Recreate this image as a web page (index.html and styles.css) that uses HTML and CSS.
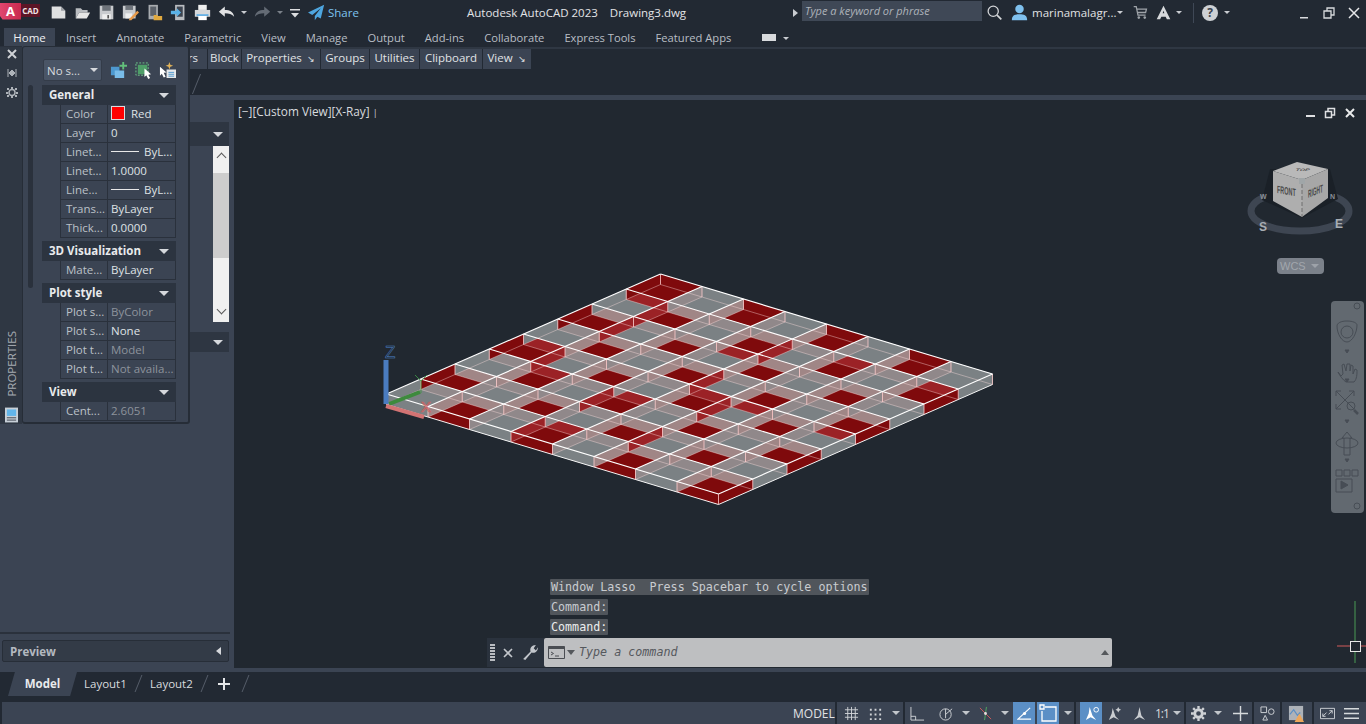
FILE: index.html
```html
<!DOCTYPE html>
<html lang="en">
<head>
<meta charset="utf-8">
<title>Autodesk AutoCAD 2023 Drawing3.dwg</title>
<link rel="stylesheet" href="styles.css">
</head>
<body>
<header class="titlebar">
  <div class="logo"><span class="logo-a">A</span><span class="logo-cad">CAD</span></div>
  <div class="qa">
    <svg class="ic" viewBox="0 0 20 20"><path d="M2 3h11l5 5v9H2z" fill="#dfe0e1"/><path d="M13 3v5h5z" fill="#9a9da1"/></svg>
    <svg class="ic" viewBox="0 0 20 20"><path d="M2 17V5h6l2 2h6v3H6z" fill="#b9bcc0"/><path d="M2 17l4-7h13l-4 7z" fill="#e6e6e6"/></svg>
    <svg class="ic" viewBox="0 0 20 20"><path d="M2 2h16v16H2z" fill="#c9cbce"/><path d="M5 2h10v6H5z" fill="#6f747b"/><path d="M5 12h10v6H5z" fill="#eee"/><path d="M11 13h2v4h-2z" fill="#555"/></svg>
    <svg class="ic" viewBox="0 0 20 20"><path d="M1 2h15v15H1z" fill="#c9cbce"/><path d="M4 2h9v5H4z" fill="#6f747b"/><path d="M4 11h8v6H4z" fill="#eee"/><path d="M9 17l9-9 2 2-9 9H8z" fill="#e79a4a"/></svg>
    <svg class="ic" viewBox="0 0 20 20"><path d="M3 1h11v17H3z" fill="#a9acb0"/><path d="M5 3h7v11H5z" fill="#5b616a"/><path d="M9 13h4l1 1h5v5H9z" fill="#e0a93f"/></svg>
    <svg class="ic" viewBox="0 0 20 20"><path d="M6 1h11v18H6z" fill="#b9bcc0"/><path d="M8 3h7v12H8z" fill="#3d4450"/><path d="M1 8h7V5l5 5-5 5v-3H1z" fill="#59b1e6"/></svg>
    <svg class="ic" viewBox="0 0 20 20"><path d="M5 1h10v6H5z" fill="#efefef"/><path d="M1 7h18v8H1z" fill="#d6d8da"/><path d="M5 12h10v7H5z" fill="#fff"/><path d="M3 12h14v2H3z" fill="#5aa9e0"/></svg>
    <svg class="ic" viewBox="0 0 20 20"><path d="M1 9l7-6v4c6 0 10 2 11 8-3-3-6-4-11-4v4z" fill="#e2e3e5"/></svg>
    <i class="caret caret-s qa-c1"></i>
    <svg class="ic qa-redo" viewBox="0 0 20 20"><path d="M19 9l-7-6v4C6 7 2 9 1 15c3-3 6-4 11-4v4z" fill="#646b75"/></svg>
    <i class="caret caret-s qa-c2"></i>
    <svg class="ic-s qa-more" viewBox="0 0 12 12"><path d="M1 2h10v1.500H1z" fill="#dcdde0"/><path d="M2 6h8L6 10.500z" fill="#dcdde0"/></svg>
    <svg class="ic qa-share" viewBox="0 0 20 20"><path d="M19 1L0 10l5 3 10-8-7 9v5l3-4 4 2z" fill="#4ea6e0"/></svg>
    <span class="share">Share</span>
  </div>
  <div class="doc-title">Autodesk AutoCAD 2023&nbsp;&nbsp;&nbsp;&nbsp;Drawing3.dwg</div>
  <i class="tri-r"></i>
  <div class="search">Type a keyword or phrase</div>
  <svg class="ic tb-search" viewBox="0 0 20 20"><circle cx="8.500" cy="8.500" r="6" fill="none" stroke="#d4d6d9" stroke-width="1.500"/><path d="M13 13l5 5" stroke="#d4d6d9" stroke-width="2"/></svg>
  <svg class="ic tb-user" viewBox="0 0 20 20"><circle cx="10" cy="6" r="5" fill="#7fc0ee"/><path d="M1 19c0-6 4-7 9-7s9 1 9 7z" fill="#7fc0ee"/></svg>
  <span class="username">marinamalagr...</span>
  <i class="caret caret-s tb-c1"></i>
  <svg class="ic tb-cart" viewBox="0 0 20 20"><path d="M2 3h3l2 10h9M6 6h11l-1 4H7" fill="none" stroke="#9ea3a9" stroke-width="1.500"/><circle cx="8" cy="16" r="1.500" fill="#9ea3a9"/><circle cx="15" cy="16" r="1.500" fill="#9ea3a9"/></svg>
  <svg class="ic tb-a" viewBox="0 0 20 20"><path d="M10 2l8 16h-4l-1.500-3h-5L6 18H2zM9 11h2l-1-3z" fill="#d6d8db" fill-rule="evenodd"/></svg>
  <i class="caret caret-s tb-c2"></i>
  <i class="tb-sep"></i>
  <span class="help">?</span>
  <i class="caret caret-s tb-c3"></i>
  <div class="winctl">
    <svg class="ic-s" viewBox="0 0 12 12"><path d="M2 10h8v1.500H2z" fill="#d8dade"/></svg>
    <svg class="ic-s" viewBox="0 0 12 12"><path d="M1 4h7v7H1zM4 4V1h7v7H8" fill="none" stroke="#d8dade" stroke-width="1.300"/></svg>
    <svg class="ic-s" viewBox="0 0 12 12"><path d="M1 1l10 10M11 1L1 11" stroke="#e6e7e9" stroke-width="1.500"/></svg>
  </div>
</header>

<nav class="tabs">
  <span class="tab active">Home</span><span class="tab">Insert</span><span class="tab">Annotate</span><span class="tab">Parametric</span><span class="tab">View</span><span class="tab">Manage</span><span class="tab">Output</span><span class="tab">Add-ins</span><span class="tab">Collaborate</span><span class="tab">Express Tools</span><span class="tab">Featured Apps</span>
  <i class="tab-min"></i><i class="caret caret-s tab-c"></i>
</nav>

<div class="panelbar">
  <span class="pb-item pb-first">Layers</span><span class="pb-item pb-block">Block</span><span class="pb-item pb-props">Properties <b class="arrow">&#8600;</b></span><span class="pb-item pb-groups">Groups</span><span class="pb-item pb-util">Utilities</span><span class="pb-item pb-clip">Clipboard</span><span class="pb-item pb-view">View <b class="arrow">&#8600;</b></span>
</div>
<div class="ribbon-body"><i class="slash slash-rb"></i></div>

<main class="workspace">
  <aside class="toolpal">
    <div class="tp-head"><i class="tri-d tp-tri"></i></div>
    <div class="tp-list">
      <div class="tp-scroll">
        <span class="sb-up"></span>
        <span class="sb-thumb"></span>
        <span class="sb-down"></span>
      </div>
    </div>
    <div class="tp-head tp-head2"><i class="tri-d tp-tri"></i></div>
    <div class="tp-fill"></div>
    <div class="tp-preview"><span>Preview</span><i class="tri-l"></i></div>
  </aside>

  <section class="viewport">
    <svg class="canvas" viewBox="234 100 1132 568" xmlns="http://www.w3.org/2000/svg">
      <g id="model"></g>
      <!-- UCS icon -->
      <g>
        <path d="M421 381v12" stroke="#3f9a3f" stroke-width="0.800"/>
        <path d="M415 375l6 6 6-6" fill="none" stroke="#3fa04a" stroke-width="0.800"/>
        <path d="M389 404l31-12" stroke="#3d8a3d" stroke-width="4"/>
        <path d="M386 360v44" stroke="#4a7cc0" stroke-width="5"/>
        <path d="M386 406l38 11" stroke="#d27373" stroke-width="4"/>
        <text class="ucs-z" x="385" y="358">Z</text>
        <text class="ucs-x" x="421" y="412">X</text>
      </g>
      <!-- view cube -->
      <ellipse cx="1300" cy="211" rx="49" ry="20" fill="none" stroke="#3e4652" stroke-width="7"/>
      <path d="M1262 200l40 18 36-19-8-30h-60z" fill="#1a2027"/>
      <text class="cube-dir" x="1259" y="231">S</text>
      <text class="cube-dir" x="1335" y="228">E</text>
      <text class="cube-dir cube-w" x="1260" y="199">W</text>
      <text class="cube-dir cube-w" x="1330" y="199">N</text>
      <path d="M1297 162l31 7-26 11-29-9z" fill="#b9b9b9"/>
      <path d="M1273 171l29 9v37l-29-16z" fill="#aeaeae"/>
      <path d="M1302 180l26-11v29l-26 19z" fill="#a7a7a7"/>
      <path d="M1299 178h6v6h-6z" fill="#a0a6a8"/>
      <path d="M1302 184v33" stroke="#6f6f6f" stroke-width="1" stroke-dasharray="4 2"/>
      <text class="cube-t" transform="translate(1277 193) skewY(10) scale(.68 1.350)">FRONT</text>
      <text class="cube-t" transform="translate(1308 198) skewY(-22) scale(.6 1.400)">RIGHT</text>
      <text class="cube-top" transform="translate(1295 171) skewX(-30) scale(1 .5)">TOP</text>
      <rect x="1277" y="258" width="47" height="16" rx="4" fill="#7b818a"/>
      <text class="wcs" x="1280" y="270">WCS</text>
      <path d="M1311 264h8l-4 4z" fill="#9da2a9"/>
      <!-- navigation bar -->
      <rect x="1331" y="301" width="33" height="212" rx="4" fill="#626970"/>
      <g class="nav-ic">
        <circle cx="1357" cy="306" r="3"/>
        <circle cx="1347" cy="332" r="6"/>
        <path d="M1347 321c6 0 10 2 10 4 0 8-5 17-10 17s-10-8-10-16c0-3 4-5 10-5z"/>
        <path d="M1338 372c2 4 5 8 8 10h8c3-3 3-8 3-12l-2-1-2 5v-8l-2-1-1 6v-7h-3l-1 7-2-7-2 1 1 9-2 2-3-4z"/>
        <path d="M1336 391l18 18M1354 391l-18 18M1336 391h5M1336 391v5M1354 391h-5M1354 391v5M1336 409v-5M1336 409h5"/>
        <circle cx="1351" cy="406" r="4"/>
        <path d="M1354 410l4 4" stroke-width="2.500"/>
        <path d="M1347 432l5 6h-2v17h-6v-17h-2z"/>
        <ellipse cx="1347" cy="443" rx="11" ry="5"/>
        <path d="M1336 470h6v6h-6zM1344 470h6v6h-6zM1352 470h6v6h-6zM1336 479h16v13h-16z"/>
        <path d="M1341 481l7 4-7 4z" fill="#474d55"/>
        <circle cx="1357" cy="506" r="3"/>
        <path d="M1345 350h4l-2 3zM1345 379h4l-2 3zM1345 420h4l-2 3zM1345 459h4l-2 3z" fill="#474d55"/>
      </g>
      <!-- crosshair -->
      <path d="M1355 601v40M1355 651v12" stroke="#4a9a55" stroke-width="1"/>
      <path d="M1337 646h13M1360 646h6" stroke="#d25a5a" stroke-width="1"/>
      <rect x="1350.500" y="641.500" width="10" height="10" fill="none" stroke="#e8e8e8"/>
    </svg>

    <div class="vp-label">[&#8722;][Custom View][X-Ray] <span class="vp-caret">|</span></div>
    <div class="vp-ctl">
      <svg class="ic-s" viewBox="0 0 12 12"><path d="M2 8h9v2H2z" fill="#dfe0e2"/></svg>
      <svg class="ic-s" viewBox="0 0 12 12"><path d="M1.500 4.500h6v6h-6zM4 4V1.500h6.500V8H8" fill="none" stroke="#dfe0e2" stroke-width="1.500"/></svg>
      <svg class="ic-s" viewBox="0 0 12 12"><path d="M2 2l8 8M10 2l-8 8" stroke="#e9eaeb" stroke-width="2"/></svg>
    </div>

    <div class="cmd">
      <div class="cmd-lines">
        <span class="cmd-line">Window Lasso  Press Spacebar to cycle options</span>
        <span class="cmd-line">Command:</span>
        <span class="cmd-line cmd-bright">Command:</span>
      </div>
      <div class="cmd-bar">
        <div class="cmd-tools">
          <i class="grip"></i>
          <svg class="ic-s" viewBox="0 0 12 12"><path d="M2 2l8 8M10 2l-8 8" stroke="#c2c6cb" stroke-width="1.600"/></svg>
          <svg class="ic" viewBox="0 0 16 16"><path d="M2 14l7-7c-1-3 1-6 5-6l-2 3 2 2 2-3c0 4-3 6-6 5l-6 7z" fill="#c2c6cb"/></svg>
        </div>
        <div class="cmd-input">
          <svg class="cmd-prompt" viewBox="0 0 17 13"><path d="M.5.500h16v12H.5z" fill="none" stroke="#4a4d52"/><path d="M.5.500h16v2.500H.5z" fill="#4a4d52"/><path d="M3 6l2.500 1.500L3 9M7 10h4" fill="none" stroke="#4a4d52"/></svg>
          <i class="tri-d tri-dark"></i>
          <span class="cmd-ph">Type a command</span>
          <i class="tri-u"></i>
        </div>
      </div>
    </div>
  </section>
</main>

<div class="band"></div>
<div class="layouts">
  <span class="lt-model">Model</span>
  <span class="lt">Layout1</span><i class="slash"></i>
  <span class="lt">Layout2</span><i class="slash"></i>
  <svg class="lt-plus" viewBox="0 0 14 14"><path d="M7 1v12M1 7h12" stroke="#e4e6e8" stroke-width="2"/></svg><i class="slash"></i>
</div>

<footer class="status">
  <span class="st-grp st-model">MODEL</span>
  <span class="st-grp st-a">
    <svg class="st-ic" viewBox="0 0 16 16"><path d="M4 1v14M8 1v14M12 1v14M1 4h14M1 8h14M1 12h14" stroke="#cfd2d6"/></svg>
    <svg class="st-ic" viewBox="0 0 16 16"><path d="M2 3h2v2H2zM7 3h2v2H7zM12 3h2v2h-2zM2 8h2v2H2zM7 8h2v2H7zM12 8h2v2h-2zM2 13h2v2H2zM7 13h2v2H7zM12 13h2v2h-2z" fill="#cfd2d6"/></svg>
    <i class="caret st-car"></i>
  </span>
  <span class="st-grp st-b">
    <svg class="st-ic" viewBox="0 0 16 16"><path d="M1 1v14h14M1 11h5v4" fill="none" stroke="#cfd2d6"/></svg>
    <svg class="st-ic st-m" viewBox="0 0 16 16"><circle cx="7" cy="9" r="6" fill="none" stroke="#cfd2d6"/><path d="M7 9l7-6M7 3v10" stroke="#cfd2d6"/></svg>
    <i class="caret st-car st-m2"></i>
    <svg class="st-ic st-m2" viewBox="0 0 16 16"><path d="M2 2l12 12" stroke="#d25a5a"/><path d="M9 1L7 15" stroke="#4faa5f"/><circle cx="8" cy="8" r="1.500" fill="#e0e0e0"/></svg>
    <i class="caret st-car st-m2"></i>
  </span>
  <span class="st-on st-on1"><svg class="st-ic" viewBox="0 0 16 16"><path d="M14 2L1 14h14" fill="none" stroke="#fff" stroke-width="1.300"/><circle cx="8" cy="8" r="1.700" fill="#fff"/></svg></span>
  <span class="st-on st-on2"><svg class="st-ic st-box" viewBox="0 0 18 18"><path d="M6 3h11v14H3V7" fill="none" stroke="#fff" stroke-width="1.300"/><path d="M1 1h4v4H1z" fill="none" stroke="#fff" stroke-width="1.300"/></svg></span>
  <span class="st-grp st-c"><i class="caret st-car"></i></span>
  <span class="st-grp st-d">
    <span class="st-on st-on3"><svg class="st-ic" viewBox="0 0 16 16"><path d="M6 1l3 9 4 5-6-3-5 3 3-7z" fill="#fff"/><circle cx="13" cy="4" r="2.500" fill="none" stroke="#fff"/></svg></span>
    <svg class="st-ic st-m4" viewBox="0 0 16 16"><path d="M6 2l3 9 4 4-6-3-5 3 3-7z" fill="#c9ccd0"/><path d="M12 1l1 2 2 1-2 1-1 2-1-2-2-1 2-1z" fill="#c9ccd0"/></svg>
    <svg class="st-ic st-m5" viewBox="0 0 16 16"><path d="M8 1l2 9 4 5-6-3-6 3 4-5z" fill="#c9ccd0"/></svg>
    <span class="st-scale">1:1</span>
    <i class="caret st-car st-m6"></i>
  </span>
  <span class="st-grp st-e">
    <svg class="st-ic" viewBox="0 0 16 16"><circle cx="8" cy="8" r="4" fill="none" stroke="#cfd2d6" stroke-width="3"/><path d="M8 0v3M8 13v3M0 8h3M13 8h3M2.300 2.300l2 2M11.700 11.700l2 2M2.300 13.700l2-2M11.700 4.300l2-2" stroke="#cfd2d6" stroke-width="2.500"/></svg>
    <i class="caret st-car st-m2"></i>
  </span>
  <span class="st-grp st-f"><svg class="st-ic" viewBox="0 0 16 16"><path d="M8 0v16M0 8h16" stroke="#d6d9dc" stroke-width="1.500"/></svg></span>
  <span class="st-grp st-g"><svg class="st-ic" viewBox="0 0 16 16"><path d="M1 1h6v6H1zM3 15l2.500-5L8 15z" fill="none" stroke="#cfd2d6"/><circle cx="12" cy="6" r="3" fill="none" stroke="#cfd2d6"/></svg></span>
  <span class="st-grp st-h"><svg class="st-warn" viewBox="0 0 18 18"><path d="M1 1h15v15H1z" fill="#aeb2b8"/><path d="M2 10l4-5 4 6 3-3" fill="none" stroke="#5a8fc5" stroke-width="1.300"/><path d="M12 9l5 9H7z" fill="#eda75b"/></svg></span>
  <span class="st-grp st-i">
    <svg class="st-ic" viewBox="0 0 16 16"><path d="M.5 2.500h15v11H.5z" fill="none" stroke="#cfd2d6"/><path d="M3 11l4-4M3 11h3M3 11V8M13 5L9 9M13 5h-3M13 5v3" fill="none" stroke="#cfd2d6"/></svg>
    <svg class="st-ic st-m8" viewBox="0 0 16 16"><path d="M0 3h16M0 8h16M0 13h16" stroke="#d6d9dc" stroke-width="1.700"/></svg>
  </span>
</footer>

<div class="palette">
  <div class="pal-strip">
    <svg class="ic-s pal-x" viewBox="0 0 12 12"><path d="M2 2l8 8M10 2l-8 8" stroke="#cfd2d6" stroke-width="2"/></svg>
    <svg class="ic-s" viewBox="0 0 12 12"><path d="M2 2v8M10 2v8M3 6l3-3v6zM9 6L6 3v6z" fill="#aeb3b9" stroke="#aeb3b9" stroke-width="1"/></svg>
    <svg class="ic-s" viewBox="0 0 12 12"><path d="M1 2h2v2H1zM5 1h2v2H5zM9 2h2v2H9zM0 6h2v2H0zM10 6h2v2h-2zM1 9h2v2H1zM5 10h2v2H5zM9 9h2v2H9z" fill="#aeb3b9"/><circle cx="6" cy="6.500" r="3" fill="none" stroke="#aeb3b9" stroke-width="1.500"/></svg>
    <span class="pal-vtitle">PROPERTIES</span>
    <svg class="pal-icon" viewBox="0 0 14 16"><path d="M0 0h14v16H0z" fill="#c8d0d8"/><path d="M2 2h10v7H2z" fill="#62b5ea"/><path d="M2 11h10M2 13.500h10" stroke="#3a414c"/></svg>
  </div>
  <div class="pal-main">
    <i class="pal-track"></i>
    <div class="pal-content">
      <div class="pal-top">
        <span class="pal-select">No s...<i class="tri-d"></i></span>
        <svg class="pal-tool" viewBox="0 0 18 18"><path d="M1 5h9v9H1z" fill="#4d98cf"/><path d="M5 9h10v8H5z" fill="#79bce9"/><path d="M14 0v8M10 4h8" stroke="#63c07b" stroke-width="2"/></svg>
        <svg class="pal-tool pal-t2" viewBox="0 0 18 18"><path d="M3 3h10v10H3z" fill="#4e9e68"/><path d="M1 1h13v13H1z" fill="none" stroke="#6fc98a" stroke-dasharray="2 1.500"/><path d="M10 7l7 6-3 .5 2 3.500-2 1-2-4-2 2z" fill="#fff"/></svg>
        <svg class="pal-tool pal-t3" viewBox="0 0 18 18"><path d="M1 5l7 6-3 .5 2 4-2 1-2-4-2 2z" fill="#fff"/><path d="M8 8h10v9H8z" fill="#e6e8ea"/><path d="M10 11h6M10 13h6M10 15h6" stroke="#4d98cf"/><path d="M11 0l1 3 3 1-3 1-1 3-1-3-3-1 3-1z" fill="#e0b25a"/></svg>
      </div>

      <div class="sec">General<i class="tri-d"></i></div>
      <div class="row"><span class="lab">Color</span><span class="val"><i class="swatch"></i>Red</span></div>
      <div class="row"><span class="lab">Layer</span><span class="val">0</span></div>
      <div class="row"><span class="lab">Linet...</span><span class="val"><i class="lt-line"></i>ByL...</span></div>
      <div class="row"><span class="lab">Linet...</span><span class="val">1.0000</span></div>
      <div class="row"><span class="lab">Line...</span><span class="val"><i class="lt-line"></i>ByL...</span></div>
      <div class="row"><span class="lab">Trans...</span><span class="val">ByLayer</span></div>
      <div class="row"><span class="lab">Thick...</span><span class="val">0.0000</span></div>

      <div class="sec sec-3">3D Visualization<i class="tri-d"></i></div>
      <div class="row"><span class="lab">Mate...</span><span class="val">ByLayer</span></div>

      <div class="sec sec-3">Plot style<i class="tri-d"></i></div>
      <div class="row"><span class="lab">Plot s...</span><span class="val dim">ByColor</span></div>
      <div class="row"><span class="lab">Plot s...</span><span class="val">None</span></div>
      <div class="row"><span class="lab">Plot t...</span><span class="val dim">Model</span></div>
      <div class="row"><span class="lab">Plot t...</span><span class="val dim">Not availa...</span></div>

      <div class="sec sec-3">View<i class="tri-d"></i></div>
      <div class="row"><span class="lab">Cent...</span><span class="val dim">2.6051</span></div>
    </div>
  </div>
</div>
<script src="script.js"></script>
</body>
</html>
```

FILE: styles.css
```css
* { box-sizing: border-box; }
html, body { margin: 0; padding: 0; }
body {
  width: 1366px; height: 724px; overflow: hidden; position: relative;
  display: flex; flex-direction: column;
  background: #222933; color: #d8dbdf;
  font: 11.500px "Open Sans", "Liberation Sans", sans-serif;
}
i { display: block; font-style: normal; flex: none; }
svg { display: block; flex: none; }
.ic { width: 17px; height: 17px; }
.ic-s { width: 12px; height: 12px; }

.caret { width: 0; height: 0; border-left: 4px solid transparent; border-right: 4px solid transparent; border-top: 4px solid #c9ccd1; }
.caret-s { border-left-width: 3px; border-right-width: 3px; border-top-width: 3px; }
.tri-d { width: 0; height: 0; border-left: 5px solid transparent; border-right: 5px solid transparent; border-top: 5px solid #d5d8dc; }
.tri-l { width: 0; height: 0; border-top: 4px solid transparent; border-bottom: 4px solid transparent; border-right: 5px solid #d5d8dc; }
.tri-r { width: 0; height: 0; border-top: 4px solid transparent; border-bottom: 4px solid transparent; border-left: 5px solid #c9ccd1; }
.tri-u { width: 0; height: 0; border-left: 4px solid transparent; border-right: 4px solid transparent; border-bottom: 5px solid #55585c; margin-left: auto; margin-right: 3px; }
.tri-dark { border-top-color: #55585c; border-left-width: 4px; border-right-width: 4px; margin-left: 2px; }
.slash { width: 1px; height: 18px; background: #565e6a; transform: skewX(-22deg); }

/* title bar */
.titlebar { height: 25px; display: flex; align-items: center; flex: none; }
.logo { width: 40px; height: 17px; display: flex; align-items: flex-start; margin-top: -3px; }
.logo-a { width: 21px; height: 17px; background: linear-gradient(90deg, #e0466f, #c92a4e); color: #fff; font-weight: 700; font-size: 13px; line-height: 16px; text-align: center; clip-path: polygon(0 0, 100% 0, 100% 100%, 12% 100%, 0 80%); }
.logo-cad { width: 19px; height: 13px; background: #5c1526; color: #f0e6e8; font-size: 8px; font-weight: 700; line-height: 13px; text-align: center; margin-top: 1px; }
.qa { display: flex; align-items: center; gap: 7px; margin-left: 10px; }
.qa-c1, .qa-c2 { margin-left: -1px; }
.qa-c2 { border-top-color: #7b818a; }
.qa-more { margin-left: -1px; }
.share { color: #7ec3ef; font-size: 11.500px; margin-left: -4px; width: 30px; }
.doc-title { margin-left: 109px; width: 218px; color: #e2e4e7; font-size: 11.500px; white-space: nowrap; }
.tri-r { margin-left: 108px; }
.search { width: 180px; height: 20px; margin-left: 4px; background: #3f4856; color: #aeb3ba; font-style: italic; font-size: 11px; line-height: 20px; padding-left: 3px; margin-top: -3px; }
.tb-search { margin-left: 4px; }
.tb-user { margin-left: 8px; }
.username { margin-left: 4px; font-size: 11.500px; color: #e0e2e5; width: 85px; white-space: nowrap; }
.tb-cart { margin-left: 9px; }
.tb-a { margin-left: 6px; }
.tb-c2 { margin-left: 4px; }
.tb-sep { width: 1px; height: 20px; background: #3f4856; margin-left: 11px; }
.help { width: 16px; height: 16px; border-radius: 50%; background: #cdd0d4; color: #3a414c; font-size: 12px; font-weight: 700; text-align: center; line-height: 16px; margin-left: 8px; }
.tb-c3 { margin-left: 6px; }
.winctl { display: flex; gap: 13px; margin-left: auto; margin-right: 6px; }

/* ribbon */
.tabs { height: 22px; display: flex; align-items: flex-end; flex: none; padding-left: 4px; font-size: 11.200px; }
.tab { height: 19px; padding: 0 10px; color: #b9bec5; line-height: 19px; white-space: nowrap; }
.tab.active { background: #3b4453; color: #f0f1f3; padding: 0 9px; margin-right: 1px; width: 51px; text-align: center; font-size: 11.500px; }
.tab-min { width: 14px; height: 7px; background: #d8dadd; margin: 0 0 6px 21px; }
.tab-c { margin: 0 0 7px 7px; }

.panelbar { height: 22px; flex: none; display: flex; gap: 1px; border-top: 2px solid #2f3743; padding-left: 150px; }
.pb-item { background: #3b4453; color: #e0e3e6; line-height: 18px; height: 20px; white-space: nowrap; text-align: center; }
.pb-first { width: 57px; text-align: right; padding-right: 9px; }
.pb-block { width: 33px; }
.pb-props { width: 78px; padding-right: 1px; }
.pb-groups { width: 48px; }
.pb-util { width: 49px; }
.pb-clip { width: 62px; }
.pb-view { width: 48px; padding-right: 1px; }
.arrow { font-weight: 400; font-size: 9px; margin-left: 2px; }

.ribbon-body { height: 26px; flex: none; padding: 5px 0 0 196px; }
.slash-rb { height: 20px; }

/* workspace */
.workspace { height: 573px; flex: none; display: flex; background: #3b4453; padding-top: 5px; gap: 4px; }
.toolpal { width: 230px; height: 564px; flex: none; display: flex; flex-direction: column; padding-top: 22px; }
.tp-head { height: 24px; background: #2e3642; display: flex; align-items: center; justify-content: flex-end; padding-right: 6px; margin-right: 1px; }
.tp-list { height: 176px; display: flex; justify-content: flex-end; margin-right: 1px; }
.tp-scroll { width: 16px; background: #f0f0f0; display: flex; flex-direction: column; align-items: center; }
.sb-up, .sb-down { width: 7px; height: 7px; border: solid #5a5a5a; border-width: 1.500px 0 0 1.500px; transform: rotate(45deg); margin-top: 8px; flex: none; }
.sb-down { transform: rotate(225deg); margin-top: auto; margin-bottom: 9px; }
.sb-thumb { width: 16px; height: 85px; background: #cdcdcd; margin-top: 12px; }
.tp-head2 { height: 20px; margin-top: 10px; }
.tp-fill { flex: 1; border-bottom: 2px solid #2a313c; margin-bottom: 6px; }
.tp-preview { height: 22px; background: #333b47; border: 1px solid #272e38; border-radius: 2px; margin: 0 1px 2px 2px; display: flex; align-items: center; justify-content: space-between; padding: 0 7px; color: #b4b9c0; font-weight: 700; }
.viewport { flex: 1; background: #212830; position: relative; overflow: hidden; }
.canvas { position: absolute; left: 0; top: 0; width: 1132px; height: 568px; }

.ucs-z { font: 400 17px "Liberation Sans", sans-serif; fill: none; stroke: #4d84cc; stroke-width: .5; }
.ucs-x { font: 400 15px "Liberation Sans", sans-serif; fill: none; stroke: #cf6060; stroke-width: .7; }
.cube-dir { font: 700 12px "Liberation Sans", sans-serif; fill: #a9aeb4; }
.cube-w { font-size: 7px; fill: #8b9096; }
.cube-t { font: 700 8px "Liberation Sans", sans-serif; fill: #4a4a4a; }
.cube-top { font: 700 7px "Liberation Sans", sans-serif; fill: #555; }
.wcs { font: 400 11px "Liberation Sans", sans-serif; fill: #a2a7ad; }
.nav-ic { fill: none; stroke: #474d55; stroke-width: 1; }

.vp-label { position: absolute; left: 4px; top: 3px; color: #d8dbdf; font-size: 11.800px; white-space: nowrap; }
.vp-caret { font-size: 9px; }
.vp-ctl { position: absolute; right: 10px; top: 7px; display: flex; gap: 8px; }

.cmd { position: absolute; left: 253px; top: 479px; }
.cmd-lines { display: flex; flex-direction: column; gap: 4px; align-items: flex-start; padding-left: 63px; }
.cmd-line { background: #50555b; color: #c9ccd0; height: 16px; padding: 0 1px; border-radius: 1px; font: 11.700px/16px "DejaVu Sans Mono", monospace; white-space: pre; }
.cmd-bright { color: #eceded; }
.cmd-bar { display: flex; height: 29px; margin-top: 3px; width: 625px; }
.cmd-tools { width: 57px; background: #2a323d; display: flex; align-items: center; padding-left: 3px; gap: 7px; }
.grip { width: 5px; height: 18px; background: repeating-linear-gradient(#b9bcc1 0 2px, transparent 2px 3px); }
.cmd-input { flex: 1; background: #bebfc1; display: flex; align-items: center; padding-left: 4px; border-radius: 2px; }
.cmd-prompt { width: 17px; height: 13px; }
.cmd-ph { font: italic 11.700px/16px "DejaVu Sans Mono", monospace; color: #55585d; margin: -2px 0 0 4px; }

/* layouts & status */
.band { height: 4px; flex: none; background: #3b4453; }
.layouts { height: 30px; flex: none; display: flex; align-items: flex-start; padding-left: 8px; }
.lt-model { width: 69px; height: 24px; background: #3b4453; color: #e8eaec; font-weight: 700; text-align: center; line-height: 24px; clip-path: polygon(10% 0, 100% 0, 90% 100%, 0 100%); margin-right: 7px; }
.lt { color: #d8dbdf; line-height: 24px; width: 42px; white-space: nowrap; }
.layouts .slash { margin: 3px 11px 0 12px; height: 17px; }
.lt-plus { width: 14px; height: 14px; margin: 5px 2px 0 1px; }

.status { height: 22px; flex: none; background: #3b4453; display: flex; align-items: center; padding-left: 789px; box-shadow: inset 2px 0 0 #222933; }
.st-grp { height: 22px; display: flex; align-items: center; border-right: 2px solid #222933; flex: none; }
.st-ic { width: 15px; height: 15px; }
.st-warn { width: 17px; height: 17px; }
.st-box { width: 18px; height: 18px; }
.st-model { width: 48px; padding-left: 4px; color: #e0e2e5; font-size: 12px; }
.st-a { width: 68px; padding-left: 7px; gap: 9px; }
.st-car { border-top-color: #c2c6cb; }
.st-b { width: 108px; padding-left: 5px; border-right: 0; }
.st-m { margin-left: 14px; }
.st-m2 { margin-left: 8px; }
.st-on { height: 22px; background: #5b8fc6; display: flex; align-items: center; justify-content: center; flex: none; }
.st-on1 { width: 22px; margin-right: 2px; }
.st-on2 { width: 22px; }
.st-c { width: 17px; padding-left: 5px; }
.st-d { width: 107px; padding-left: 1px; margin-left: 3px; }
.st-on3 { width: 22px; }
.st-m4 { margin-left: 5px; }
.st-m5 { margin-left: 10px; }
.st-scale { margin-left: 8px; color: #d8dbdf; font-size: 12px; letter-spacing: -1px; }
.st-m6 { margin-left: 4px; }
.st-e { width: 40px; padding-left: 5px; border-right: 0; }
.st-f { width: 28px; padding-left: 7px; }
.st-g { width: 28px; padding-left: 6px; }
.st-h { width: 32px; padding-left: 6px; }
.st-i { width: 50px; padding-left: 6px; border-right: 0; }
.st-m8 { margin-left: 9px; }

/* floating properties palette */
.palette { position: absolute; left: 0; top: 46px; width: 190px; height: 378px; display: flex; }
.pal-strip { width: 22px; background: #2f3743; display: flex; flex-direction: column; align-items: center; padding: 1px 0 0 1px; gap: 7px; border-top: 1px solid #2a313c; }
.pal-vtitle { writing-mode: vertical-rl; transform: rotate(180deg); color: #a6abb2; font-size: 11.500px; margin-top: auto; margin-bottom: 3px; }
.pal-icon { width: 13px; height: 16px; margin: 0 0 1px; }
.pal-main { flex: 1; background: #3b4453; border: 1px solid #262d37; border-width: 1px 2px 2px 1px; border-radius: 3px; display: flex; padding: 12px 13px 0 5px; gap: 9px; overflow: hidden; }
.pal-track { width: 5px; height: 203px; background: #2a313c; border-radius: 3px; margin-top: 26px; }
.pal-content { flex: 1; }
.pal-top { height: 22px; margin-bottom: 4px; display: flex; align-items: center; padding-left: 1px; }
.pal-select { width: 59px; height: 22px; background: #4a5566; border: 1px solid #343c49; border-radius: 2px; display: flex; align-items: center; justify-content: space-between; padding: 0 3px; color: #d8dbdf; }
.pal-select .tri-d { border-left-width: 4px; border-right-width: 4px; border-top-width: 4px; }
.pal-tool { width: 17px; height: 17px; margin-left: 8px; }
.pal-t3 { margin-left: 7px; }
.sec { height: 20px; background: #2c3440; color: #e8eaec; font-weight: 700; line-height: 20px; padding: 0 7px; display: flex; align-items: center; justify-content: space-between; }
.sec-3 { margin-top: 3px; }
.row { height: 19px; display: grid; grid-template-columns: 47px 1fr; margin-left: 18px; border-bottom: 1px solid #2a313c; border-left: 1px solid #2a313c; border-right: 1px solid #2a313c; }
.lab { color: #bcc1c8; padding-left: 5px; line-height: 18px; white-space: nowrap; border-right: 1px solid #2a313c; overflow: hidden; }
.val { color: #dfe2e5; padding: 0 0 2px 3px; display: flex; align-items: center; white-space: nowrap; overflow: hidden; }
.dim { color: #8d939c; }
.swatch { width: 14px; height: 14px; background: #f00; border: 1px solid #d8dadd; margin-right: 6px; }
.lt-line { width: 28px; height: 1px; background: #e8e8e8; margin-right: 5px; }
```

FILE: script.js
```js
// Builds the 8 x 8 checkerboard plate seen in the drawing area.
var NS = 'http://www.w3.org/2000/svg';
var model = document.getElementById('model');
var O = [660.5, 274], U = [41.5, 12.5], V = [-34.25, 15], H = 10.5, N = 8;
function P(i, j, down) {
  return [O[0] + i * U[0] + j * V[0], O[1] + i * U[1] + j * V[1] + (down ? H : 0)];
}
function add(tag, attrs) {
  var e = document.createElementNS(NS, tag);
  for (var k in attrs) e.setAttribute(k, attrs[k]);
  model.appendChild(e);
}
function poly(pts, fill) {
  add('polygon', { points: pts.map(function (p) { return p[0].toFixed(1) + ',' + p[1].toFixed(1); }).join(' '), fill: fill });
}
function line(a, b, col, w) {
  add('line', { x1: a[0], y1: a[1], x2: b[0], y2: b[1], stroke: col, 'stroke-width': w });
}
var RED = '#7f0a0c', GREY = '#7b8184', BRIGHT = '#9b2226';
var WALL_RED = '#a08686', WALL_GREY = '#90888a';
var bright = { 'U0,1': 1, 'V1,1': 1, 'V1,2': 1, 'U0,4': 1, 'V1,4': 1, 'U1,5': 1, 'V3,5': 1, 'U3,5': 1, 'V3,7': 1, 'U3,7': 1, 'V5,6': 1, 'U3,2': 1, 'V4,1': 1, 'U4,4': 1, 'V5,4': 1, 'V4,3': 1, 'U5,4': 1, 'U5,1': 1, 'U7,1': 1, 'U7,4': 1 };
function isRed(i, j) { return (i + j) % 2 === 0; }
function color(i, j) { return isRed(i, j) ? RED : GREY; }
var i, j;
for (i = 0; i < N; i++) for (j = 0; j < N; j++) {
  poly([P(i, j), P(i + 1, j), P(i + 1, j + 1, 1), P(i, j + 1, 1)], color(i, j));
}
function band(a, b, fill) { poly([a, b, [b[0], b[1] + H], [a[0], a[1] + H]], fill); }
function wall(i, j) { return isRed(i, j) ? WALL_RED : WALL_GREY; }
for (i = 0; i < N; i++) for (j = 0; j <= N; j++) {
  var uf = j === 0 ? color(i, 0) : j === N ? color(i, N - 1) : bright['U' + i + ',' + j] ? BRIGHT : wall(i, j);
  band(P(i, j), P(i + 1, j), uf);
}
for (i = 0; i <= N; i++) for (j = 0; j < N; j++) {
  var vf = i === 0 ? color(0, j) : i === N ? color(N - 1, j) : bright['V' + i + ',' + j] ? BRIGHT : wall(i, j);
  band(P(i, j), P(i, j + 1), vf);
}
// floor wires, then the verticals, then the top wires
for (i = 0; i <= N; i++) line(P(i, 0, 1), P(i, N, 1), i === N ? '#f4f4f4' : 'rgba(255,225,225,.4)', 1);
for (j = 0; j <= N; j++) line(P(0, j, 1), P(N, j, 1), j === N ? '#f4f4f4' : 'rgba(255,225,225,.4)', 1);
for (i = 0; i <= N; i++) for (j = 0; j <= N; j++) line(P(i, j), P(i, j, 1), 'rgba(255,205,205,.8)', 1);
for (i = 0; i <= N; i++) line(P(i, 0), P(i, N), '#ffffff', 1.1);
for (j = 0; j <= N; j++) line(P(0, j), P(N, j), '#ffffff', 1.1);
```
